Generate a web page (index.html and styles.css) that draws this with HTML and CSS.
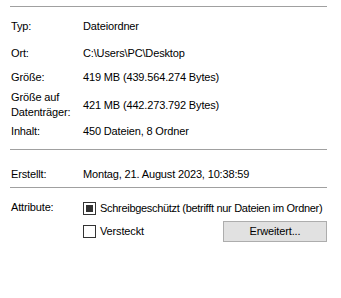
FILE: index.html
```html
<!DOCTYPE html>
<html lang="de">
<head>
<meta charset="utf-8">
<title>Eigenschaften</title>
<link rel="stylesheet" href="styles.css">
</head>
<body>
<div class="panel">
  <div class="sep"></div>
  <div class="row r-typ"><span class="label">Typ:</span><span class="value">Dateiordner</span></div>
  <div class="row r-ort"><span class="label">Ort:</span><span class="value">C:\Users\PC\Desktop</span></div>
  <div class="row r-size"><span class="label">Größe:</span><span class="value">419 MB (439.564.274 Bytes)</span></div>
  <div class="row r-disk"><span class="label two">Größe auf<br>Datenträger:</span><span class="value">421 MB (442.273.792 Bytes)</span></div>
  <div class="row r-content"><span class="label">Inhalt:</span><span class="value">450 Dateien, 8 Ordner</span></div>
  <div class="sep s2"></div>
  <div class="row r-created"><span class="label">Erstellt:</span><span class="value">Montag, 21. August 2023, 10:38:59</span></div>
  <div class="sep s3"></div>
  <div class="row r-attr">
    <span class="label">Attribute:</span>
    <div class="attrs">
      <div class="check-row first"><span class="box mixed"></span><span class="check-text tight">Schreibgeschützt (betrifft nur Dateien im Ordner)</span></div>
      <div class="check-row second"><span class="box"></span><span class="check-text">Versteckt</span><button class="btn" type="button">Erweitert...</button></div>
    </div>
  </div>
</div>
</body>
</html>
```
FILE: styles.css
```css
html, body {
  margin: 0;
  padding: 0;
  background: #ffffff;
}
body {
  font-family: "Segoe UI", "Liberation Sans", Arial, sans-serif;
  font-size: 11px;
  line-height: 13px;
  letter-spacing: -0.15px;
  color: #000000;
}
.panel {
  width: 317px;
  margin-left: 10px;
  padding-top: 6px;
  display: flex;
  flex-direction: column;
}
.sep {
  height: 1px;
  background: #a0a0a0;
}
.row {
  display: grid;
  grid-template-columns: 72px minmax(0, 1fr);
  align-items: center;
  padding-left: 1px;
}
.label, .value, .check-text {
  white-space: nowrap;
}
.check-text.tight {
  letter-spacing: -0.3px;
}
.label.two {
  line-height: 15px;
}
.r-typ { margin-top: 13px; }
.r-ort { margin-top: 14px; }
.r-size { margin-top: 11px; }
.r-disk { margin-top: 6px; }
.r-content { margin-top: 5px; }
.s2 { margin-top: 11px; }
.r-created { margin-top: 18px; }
.s3 { margin-top: 6px; }
.r-attr {
  margin-top: 13px;
  align-items: start;
}
.attrs {
  display: flex;
  flex-direction: column;
  min-width: 0;
}
.check-row {
  display: flex;
  align-items: center;
  gap: 4px;
  height: 13px;
}
.check-row.first { margin-top: 1px; }
.check-row.second {
  margin-top: 6px;
  height: 21px;
}
.box {
  box-sizing: border-box;
  width: 13px;
  height: 13px;
  border: 1px solid #333333;
  background: #ffffff;
  display: flex;
  align-items: center;
  justify-content: center;
  flex: none;
}
.box.mixed::after {
  content: "";
  width: 7px;
  height: 7px;
  background: #333333;
}
.btn {
  margin-left: auto;
  box-sizing: border-box;
  width: 104px;
  height: 21px;
  border: 1px solid #adadad;
  background: #e1e1e1;
  font: inherit;
  letter-spacing: inherit;
  color: #000000;
  padding: 0;
}
```
